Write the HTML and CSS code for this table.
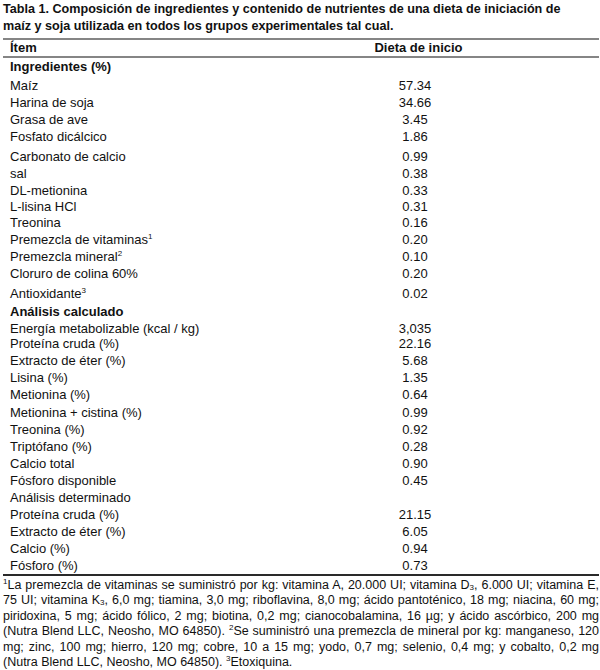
FILE: index.html
```html
<!DOCTYPE html>
<html lang="es">
<head>
<meta charset="utf-8">
<link rel="stylesheet" href="styles.css">
</head>
<body>
<div class="page">
  <p class="title">Tabla 1. Composición de ingredientes y contenido de nutrientes de una dieta de iniciación de<br>maíz y soja utilizada en todos los grupos experimentales tal cual.</p>
  <table class="tbl">
    <colgroup><col class="col1"><col class="col2"><col class="col3"></colgroup>
    <thead>
      <tr><th class="c1">Ítem</th><th class="c2">Dieta de inicio</th><th class="c3"></th></tr>
    </thead>
    <tbody>
      <tr class="sec"><td class="c1">Ingredientes (%)</td><td class="c2"></td><td></td></tr>
      <tr class="gap15"><td class="c1">Maíz</td><td class="c2">57.34</td><td></td></tr>
      <tr><td class="c1">Harina de soja</td><td class="c2">34.66</td><td></td></tr>
      <tr><td class="c1">Grasa de ave</td><td class="c2">3.45</td><td></td></tr>
      <tr class="gap05"><td class="c1">Fosfato dicálcico</td><td class="c2">1.86</td><td></td></tr>
      <tr class="gap3"><td class="c1">Carbonato de calcio</td><td class="c2">0.99</td><td></td></tr>
      <tr><td class="c1">sal</td><td class="c2">0.38</td><td></td></tr>
      <tr><td class="c1">DL-metionina</td><td class="c2">0.33</td><td></td></tr>
      <tr class="tight"><td class="c1">L-lisina HCl</td><td class="c2">0.31</td><td></td></tr>
      <tr class="tight"><td class="c1">Treonina</td><td class="c2">0.16</td><td></td></tr>
      <tr><td class="c1">Premezcla de vitaminas<sup>1</sup></td><td class="c2">0.20</td><td></td></tr>
      <tr><td class="c1">Premezcla mineral<sup>2</sup></td><td class="c2">0.10</td><td></td></tr>
      <tr><td class="c1">Cloruro de colina 60%</td><td class="c2">0.20</td><td></td></tr>
      <tr class="gap3"><td class="c1">Antioxidante<sup>3</sup></td><td class="c2">0.02</td><td></td></tr>
      <tr class="sec gap07"><td class="c1">Análisis calculado</td><td class="c2"></td><td></td></tr>
      <tr class="pair gap24"><td class="c1">Energía metabolizable (kcal / kg)</td><td class="c2">3,035</td><td></td></tr>
      <tr class="pair gap15"><td class="c1">Proteína cruda (%)</td><td class="c2">22.16</td><td></td></tr>
      <tr class="gap21"><td class="c1">Extracto de éter (%)</td><td class="c2">5.68</td><td></td></tr>
      <tr><td class="c1">Lisina (%)</td><td class="c2">1.35</td><td></td></tr>
      <tr><td class="c1">Metionina (%)</td><td class="c2">0.64</td><td></td></tr>
      <tr class="gap05"><td class="c1">Metionina + cistina (%)</td><td class="c2">0.99</td><td></td></tr>
      <tr><td class="c1">Treonina (%)</td><td class="c2">0.92</td><td></td></tr>
      <tr><td class="c1">Triptófano (%)</td><td class="c2">0.28</td><td></td></tr>
      <tr><td class="c1">Calcio total</td><td class="c2">0.90</td><td></td></tr>
      <tr><td class="c1">Fósforo disponible</td><td class="c2">0.45</td><td></td></tr>
      <tr><td class="c1">Análisis determinado</td><td class="c2"></td><td></td></tr>
      <tr><td class="c1">Proteína cruda (%)</td><td class="c2">21.15</td><td></td></tr>
      <tr><td class="c1">Extracto de éter (%)</td><td class="c2">6.05</td><td></td></tr>
      <tr><td class="c1">Calcio (%)</td><td class="c2">0.94</td><td></td></tr>
      <tr class="last"><td class="c1">Fósforo (%)</td><td class="c2">0.73</td><td></td></tr>
    </tbody>
  </table>
  <p class="notes"><sup>1</sup>La premezcla de vitaminas se suministró por kg: vitamina A, 20.000 UI; vitamina D<sub>3</sub>, 6.000 UI; vitamina E, 75 UI; vitamina K<sub>3</sub>, 6,0 mg; tiamina, 3,0 mg; riboflavina, 8,0 mg; ácido pantoténico, 18 mg; niacina, 60 mg; piridoxina, 5 mg; ácido fólico, 2 mg; biotina, 0,2 mg; cianocobalamina, 16 µg; y ácido ascórbico, 200 mg (Nutra Blend LLC, Neosho, MO 64850). <sup>2</sup>Se suministró una premezcla de mineral por kg: manganeso, 120 mg; zinc, 100 mg; hierro, 120 mg; cobre, 10 a 15 mg; yodo, 0,7 mg; selenio, 0,4 mg; y cobalto, 0,2 mg (Nutra Blend LLC, Neosho, MO 64850). <sup>3</sup>Etoxiquina.</p>
</div>
</body>
</html>
```

FILE: styles.css
```css
html, body {
  margin: 0;
  padding: 0;
  background: #ffffff;
}
.page {
  width: 596px;
  padding: 1px 1px 0 3px;
  font-family: "Liberation Sans", Arial, sans-serif;
  color: #111111;
}
.title {
  margin: 0;
  font-size: 12.6px;
  font-weight: bold;
  line-height: 17px;
  white-space: nowrap;
}
.tbl {
  margin-top: 3px;
  width: 596px;
  table-layout: fixed;
  border-collapse: collapse;
  font-size: 13px;
}
.col1 { width: 327px; }
.col2 { width: 170px; }
.col3 { width: 99px; }
.tbl thead th {
  font-weight: bold;
  height: 16px;
  line-height: 16px;
  padding: 0;
  border-top: 2px solid #858585;
  border-bottom: 2px solid #858585;
  text-align: left;
}
.tbl th.c2 {
  text-align: center;
  padding-left: 7px;
}
.tbl td {
  padding: 0;
  line-height: 17px;
  vertical-align: middle;
  white-space: nowrap;
}
.tbl td.c1 {
  padding-left: 7px;
  text-align: left;
}
.tbl th.c1 {
  padding-left: 7px;
}
.c2 {
  text-align: center;
}
.sec td.c1 {
  font-weight: bold;
}
.tight td { line-height: 16px; }
.pair td { line-height: 13.4px; }
.gap05 td { padding-top: 0.5px; }
.gap07 td { padding-top: 0.7px; }
.gap15 td { padding-top: 1.5px; }
.gap21 td { padding-top: 2.1px; }
.gap24 td { padding-top: 2.4px; }
.gap3 td { padding-top: 3px; }
.last td { border-bottom: 2px solid #2a2a2a; }
sup {
  font-size: 8px;
  line-height: 0;
  vertical-align: 5px;
}
sub {
  font-size: 8px;
  line-height: 0;
  vertical-align: -1px;
}
.notes {
  margin: 2px 0 0 0;
  font-size: 12.5px;
  line-height: 15.5px;
  text-align: justify;
}
```
